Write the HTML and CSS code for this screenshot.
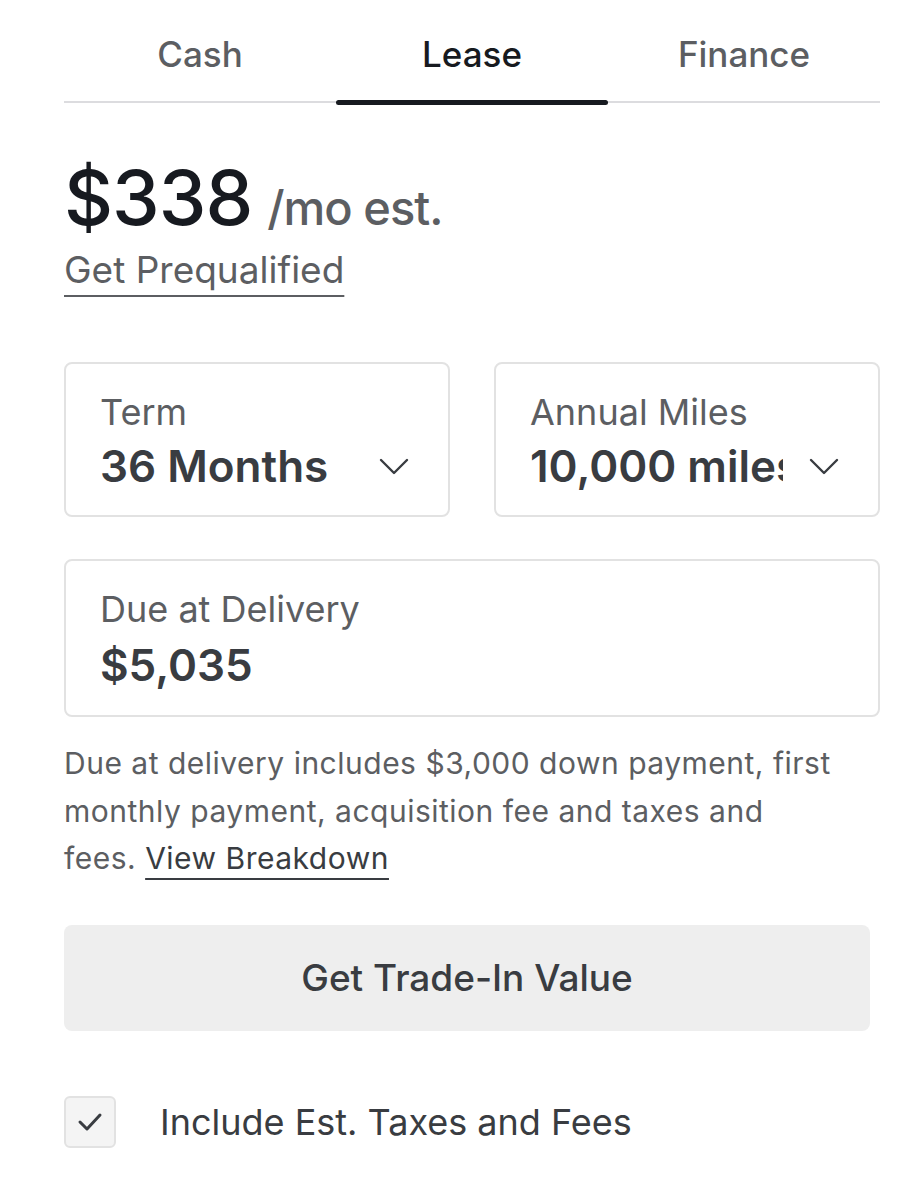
FILE: index.html
```html
<!DOCTYPE html>
<html lang="en">

<head>
    <meta charset="UTF-8">
    <meta name="viewport" content="width=device-width, initial-scale=1.0">
    <title>Lease Payment</title>
    <link rel="stylesheet" href="styles.css">
</head>

<body>
    <div class="container">
        <!-- Payment type tabs -->
        <div class="tabs">
            <div class="tab">Cash</div>
            <div class="tab active">Lease</div>
            <div class="tab">Finance</div>
        </div>

        <div class="price">
            <span class="amount">$338</span>
            <span class="per">/mo est.</span>
        </div>
        <a class="link prequal" href="#">Get Prequalified</a>

        <div class="selects">
            <div class="field">
                <div class="label">Term</div>
                <div class="value-row">
                    <span class="value">36 Months</span>
                    <svg class="chevron" width="32" height="18" viewBox="0 0 32 18">
                        <path d="M3 3 L16 16 L29 3" fill="none" stroke="#393c41" stroke-width="2.4" stroke-linecap="round" stroke-linejoin="round" />
                    </svg>
                </div>
            </div>
            <div class="field">
                <div class="label">Annual Miles</div>
                <div class="value-row">
                    <span class="value clip">10,000 miles</span>
                    <svg class="chevron" width="32" height="18" viewBox="0 0 32 18">
                        <path d="M3 3 L16 16 L29 3" fill="none" stroke="#393c41" stroke-width="2.4" stroke-linecap="round" stroke-linejoin="round" />
                    </svg>
                </div>
            </div>
        </div>

        <div class="field wide">
            <div class="label">Due at Delivery</div>
            <div class="value">$5,035</div>
        </div>

        <p class="note">Due at delivery includes $3,000 down payment, first monthly payment, acquisition fee and taxes and fees. <a class="link" href="#">View Breakdown</a></p>

        <button class="trade">Get Trade-In Value</button>

        <label class="check">
            <span class="box">
                <svg width="28" height="24" viewBox="0 0 28 24">
                    <path d="M4 12 L11 19 L24 5" fill="none" stroke="#393c41" stroke-width="3" stroke-linecap="round" stroke-linejoin="round" />
                </svg>
            </span>
            <span class="check-text">Include Est. Taxes and Fees</span>
        </label>
    </div>
</body>

</html>
```

FILE: styles.css
```css
body {
    font-family: Inter, "Open Sans", sans-serif;
    margin: 0;
    padding: 0;
    background: #fff;
    color: #393c41;
}

.container {
    width: 816px;
    padding: 0 0 0 64px;
}

.tabs {
    display: flex;
    border-bottom: 2px solid #dcdcdf;
    margin-top: 33px;
}

.tab {
    flex: 1;
    text-align: center;
    font-size: 35px;
    line-height: 42px;
    font-weight: 500;
    color: #5c5e62;
    padding-bottom: 26px;
    position: relative;
}

.tab.active {
    color: #171a20;
}

.tab.active::after {
    content: "";
    position: absolute;
    left: 0;
    right: 0;
    bottom: -4px;
    height: 5px;
    border-radius: 3px;
    background: #171a20;
}

.price {
    margin-top: 54px;
    line-height: 80px;
    display: flex;
    align-items: baseline;
}

.amount {
    font-size: 76px;
    font-weight: 500;
    color: #171a20;
    letter-spacing: -1px;
}

.per {
    font-size: 47px;
    font-weight: 500;
    color: #5c5e62;
    margin-left: 15px;
    letter-spacing: -1px;
}

.link {
    color: #5c5e62;
    text-decoration: underline;
    text-decoration-thickness: 2px;
    text-underline-offset: 12px;
}

.prequal {
    display: inline-block;
    font-size: 37px;
    line-height: 44px;
    margin-top: 0;
}

.selects {
    display: flex;
    gap: 44px;
    margin-top: 70px;
}

.field {
    flex: 1;
    border: 2px solid #e2e2e2;
    border-radius: 8px;
    padding: 28px 34px 24px 34px;
}

.label {
    font-size: 36px;
    line-height: 40px;
    color: #5c5e62;
}

.value-row {
    display: flex;
    align-items: center;
    margin-top: 9px;
}

.value {
    font-size: 44px;
    line-height: 50px;
    font-weight: 600;
    color: #393c41;
}

.value.clip {
    width: 253px;
    overflow: hidden;
    white-space: nowrap;
}

.chevron {
    margin-left: auto;
    margin-right: 4px;
}

.field.wide {
    margin-top: 42px;
    padding-bottom: 25px;
}

.field.wide .value {
    margin-top: 11px;
}

.note {
    max-width: 775px;
    font-size: 30px;
    line-height: 47.5px;
    letter-spacing: 0.5px;
    color: #5c5e62;
    margin: 23px 0 0 0;
}

.note .link {
    color: #393c41;
    text-underline-offset: 9px;
}

.trade {
    display: block;
    width: 806px;
    height: 106px;
    margin-top: 42px;
    border: none;
    border-radius: 8px;
    background: #eeeeee;
    font-family: inherit;
    font-size: 37px;
    font-weight: 500;
    color: #393c41;
}

.check {
    display: flex;
    align-items: center;
    margin-top: 65px;
}

.box {
    width: 48px;
    height: 48px;
    border: 2px solid #e2e2e2;
    border-radius: 6px;
    background: #f4f4f4;
    display: flex;
    align-items: center;
    justify-content: center;
}

.check-text {
    font-size: 36px;
    margin-left: 44px;
    color: #393c41;
}
```
